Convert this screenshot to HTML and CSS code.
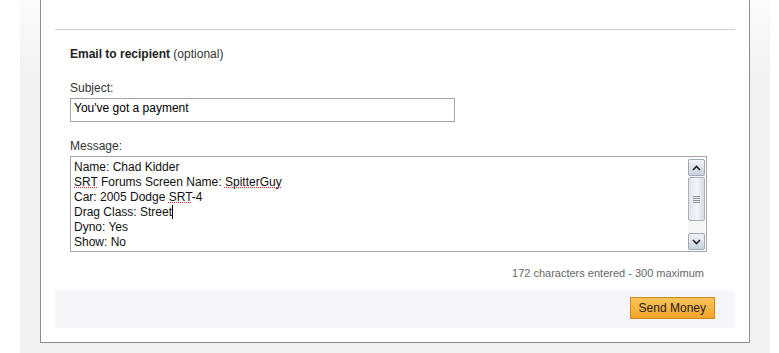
FILE: index.html
```html
<!DOCTYPE html>
<html lang="en">
<head>
    <meta charset="UTF-8">
    <title>Send Money</title>
    <link rel="stylesheet" href="styles.css">
</head>
<body>
    <div class="page">
        <div class="card">
            <div class="section">
                <h3 class="section-title">Email to recipient <span class="optional">(optional)</span></h3>

                <label class="field-label" for="subject">Subject:</label>
                <div class="input" id="subject">You've got a payment</div>

                <label class="field-label" for="message">Message:</label>
                <div class="textarea" id="message">
                    <div class="textarea-text">
                        <div>Name: Chad Kidder</div>
                        <div><span class="misspelled">SRT</span> Forums Screen Name: <span class="misspelled">SpitterGuy</span></div>
                        <div>Car: 2005 Dodge <span class="misspelled">SRT</span>-4</div>
                        <div>Drag Class: Street<span class="caret"></span></div>
                        <div>Dyno: Yes</div>
                        <div>Show: No</div>
                    </div>
                    <div class="scrollbar">
                        <div class="scroll-btn">
                            <svg width="9" height="6" viewBox="0 0 9 6"><path d="M1 5 L4.5 1.5 L8 5" fill="none" stroke="#222" stroke-width="1.6"/></svg>
                        </div>
                        <div class="scroll-thumb">
                            <span></span><span></span><span></span><span></span>
                        </div>
                        <div class="scroll-track"></div>
                        <div class="scroll-btn">
                            <svg width="9" height="6" viewBox="0 0 9 6"><path d="M1 1 L4.5 4.5 L8 1" fill="none" stroke="#222" stroke-width="1.6"/></svg>
                        </div>
                    </div>
                </div>
                <div class="counter">172 characters entered - 300 maximum</div>
            </div>

            <div class="actions">
                <button class="send-btn" type="button">Send Money</button>
            </div>
        </div>
    </div>
</body>
</html>
```

FILE: styles.css
```css
body {
    margin: 0;
    background-color: #ffffff;
    font-family: "Liberation Sans", Arial, sans-serif;
    font-size: 12px;
    color: #000;
}

.page {
    width: 710px;
    margin-left: 20px;
    padding: 0 20px 11px 20px;
    background: linear-gradient(#fbfbfb, #f1f1f1 80px);
}

.card {
    background-color: #ffffff;
    border: 1px solid #8c8c8c;
    border-top: none;
    padding: 29px 14px 14px 14px;
}

.section {
    border-top: 1px solid #cfcfcf;
    padding: 17px 28px 0 15px;
}

.section-title {
    margin: 0 0 19px 0;
    font-size: 12px;
    line-height: 15px;
    font-weight: bold;
    color: #222;
}

.optional {
    font-weight: normal;
    color: #333;
}

.field-label {
    display: block;
    line-height: 15px;
    color: #333;
    margin-bottom: 2px;
}

.input {
    width: 380px;
    height: 20px;
    border: 1px solid #a5a5a5;
    padding: 2px 0 0 3px;
    line-height: 15px;
    margin-bottom: 17px;
}

.textarea {
    display: flex;
    width: 635px;
    height: 94px;
    border: 1px solid #a5a5a5;
}

.textarea-text {
    flex: 1;
    padding: 3px 0 0 3px;
    line-height: 15px;
    color: #111;
}

.misspelled {
    text-decoration: underline dotted #e03030;
    text-decoration-thickness: 1px;
    text-underline-offset: 1px;
}

.caret {
    display: inline-block;
    width: 1px;
    height: 14px;
    background-color: #000;
    vertical-align: -3px;
}

.scrollbar {
    display: flex;
    flex-direction: column;
    width: 17px;
    margin: 2px 1px 1px 0;
    background-color: #f6f6f4;
}

.scroll-btn {
    height: 15px;
    border: 1px solid #9fa8b8;
    border-radius: 2px;
    background: linear-gradient(#f2f4f8, #c9d1de);
    display: flex;
    align-items: center;
    justify-content: center;
}

.scroll-thumb {
    height: 42px;
    margin-top: 1px;
    border: 1px solid #a8b0be;
    border-radius: 2px;
    background: linear-gradient(90deg, #dfe3ea, #f4f5f8 50%, #d8dde5);
    display: flex;
    flex-direction: column;
    align-items: center;
    justify-content: center;
    gap: 1px;
}

.scroll-thumb span {
    width: 7px;
    height: 1px;
    background-color: #8e96a6;
}

.scroll-track {
    flex: 1;
}

.counter {
    text-align: right;
    font-size: 11px;
    line-height: 14px;
    color: #666;
    margin-top: 14px;
    padding: 0 3px 11px 0;
}

.actions {
    display: flex;
    justify-content: flex-end;
    background-color: #f4f6f9;
    padding: 6px 20px 9px 0;
}

.send-btn {
    font-family: "Liberation Sans", Arial, sans-serif;
    font-size: 12px;
    color: #222;
    height: 22px;
    padding: 0 8px;
    border: 1px solid #c98a1c;
    background: linear-gradient(#fcc65a, #f4a42b);
    cursor: pointer;
}
```
